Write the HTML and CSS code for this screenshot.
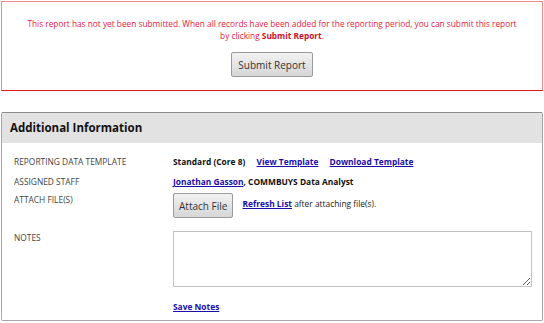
FILE: index.html
```html
<!DOCTYPE html>
<html lang="en">
<head>
    <meta charset="UTF-8">
    <title>Report Submission</title>
    <link rel="stylesheet" href="styles.css">
</head>
<body>
    <div class="notice">
        <p>This report has not yet been submitted. When all records have been added for the reporting period, you can submit this report by clicking <strong>Submit Report</strong>.</p>
        <button class="btn btn-submit" type="button">Submit Report</button>
    </div>

    <div class="panel">
        <div class="panel-header">Additional Information</div>
        <div class="panel-body">
            <div class="row">
                <div class="label">Reporting Data Template</div>
                <div class="value">
                    <b>Standard (Core 8)</b>
                    <a href="#" class="link">View Template</a>
                    <a href="#" class="link">Download Template</a>
                </div>
            </div>
            <div class="row">
                <div class="label">Assigned Staff</div>
                <div class="value"><b><a href="#">Jonathan Gasson</a>, COMMBUYS Data Analyst</b></div>
            </div>
            <div class="row row-attach">
                <div class="label">Attach File(s)</div>
                <div class="value">
                    <button class="btn btn-attach" type="button">Attach File</button>
                    <a href="#" class="link">Refresh List</a> after attaching file(s).
                </div>
            </div>
            <div class="row row-notes">
                <div class="label">Notes</div>
                <div class="value">
                    <textarea class="notes"></textarea>
                    <a href="#" class="save">Save Notes</a>
                </div>
            </div>
        </div>
    </div>
</body>
</html>
```

FILE: styles.css
```css
body {
    font-family: "Open Sans", "Liberation Sans", sans-serif;
    margin: 0;
    padding: 1px 1px 0 1px;
    background: white;
    color: #222;
}
.notice {
    border: 1px solid #f28b8b;
    border-bottom-color: #e31b1b;
    text-align: center;
    padding: 16px 22px 13px;
    height: 59px;
}
.notice p {
    margin: 0;
    color: #e8193c;
    font-size: 8.3px;
    line-height: 12px;
}
.notice strong {
    color: #c8102e;
}
.btn {
    font-family: "Open Sans", "Liberation Sans", sans-serif;
    background: linear-gradient(#f2f2f2, #d6d6d6);
    border: 1px solid #9a9a9a;
    border-radius: 2px;
    color: #333;
    padding: 0 6px;
    cursor: pointer;
}
.btn-submit {
    margin-top: 10px;
    height: 25px;
    font-size: 10px;
}
.panel {
    margin-top: 21px;
    border: 1px solid #a8a8a8;
    border-top-color: #8a8a8a;
    border-radius: 2px;
    height: 207px;
}
.panel-header {
    background: #e2e2e2;
    font-weight: bold;
    font-size: 11.5px;
    padding: 0 8px;
    height: 30px;
    line-height: 30px;
    color: #111;
}
.panel-body {
    padding: 9px 0 0 12px;
}
.row {
    display: grid;
    grid-template-columns: 159px 1fr;
    font-size: 8.4px;
    line-height: 20px;
}
.label {
    text-transform: uppercase;
    color: #444;
}
.value b {
    color: #111;
}
.value a,
.link {
    color: #1a0dab;
    font-weight: bold;
}
.link {
    margin-left: 9px;
}
.row-attach {
    line-height: 14px;
}
.row-attach .label {
    padding-top: 1px;
}
.row-attach .link {
    margin-left: 7px;
}
.btn-attach {
    height: 25px;
    font-size: 10px;
    padding: 0 5px;
    vertical-align: middle;
    margin-top: 1px;
}
.row-notes {
    margin-top: 13px;
}
.row-notes .label {
    line-height: 14px;
}
.notes {
    display: block;
    width: 359px;
    height: 56px;
    box-sizing: border-box;
    border: 1px solid #c3c3c3;
    margin: 0;
    resize: vertical;
}
.save {
    display: inline-block;
    margin-top: 10px;
}
```
